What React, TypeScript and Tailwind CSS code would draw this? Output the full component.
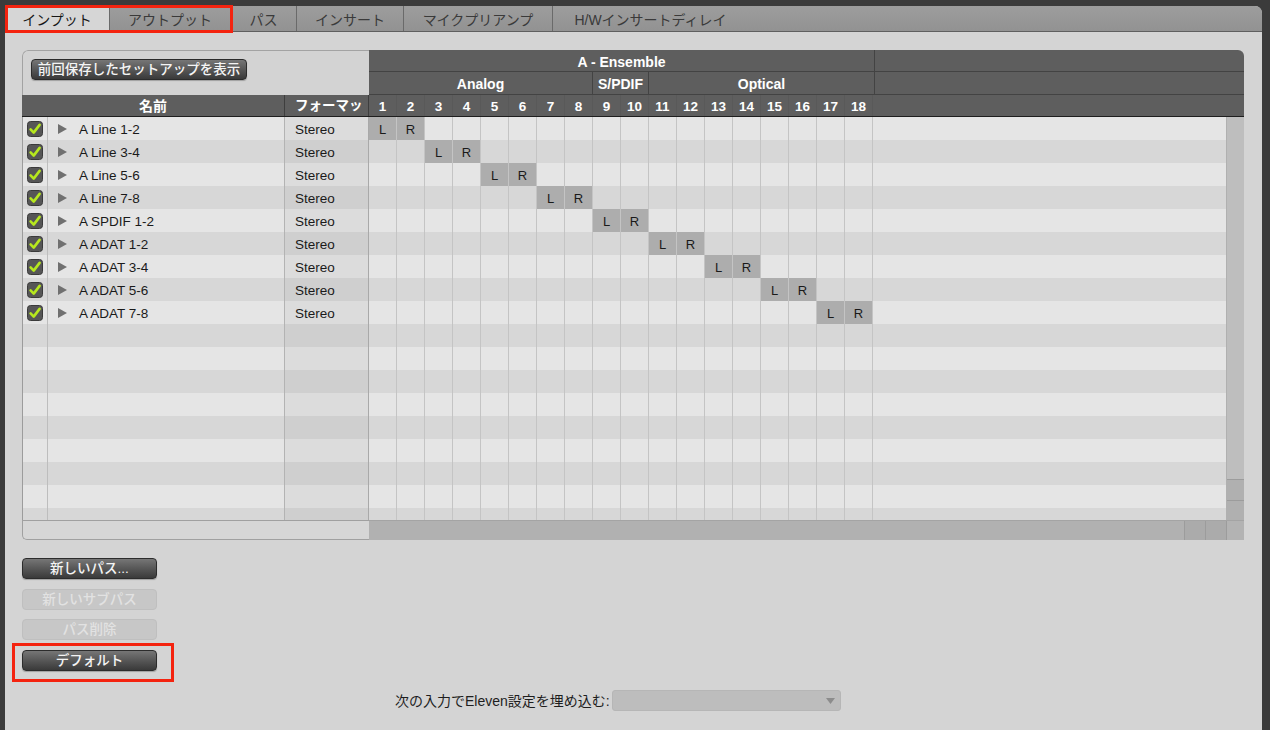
import React from "react";

const NAMES = [
  "A Line 1-2",
  "A Line 3-4",
  "A Line 5-6",
  "A Line 7-8",
  "A SPDIF 1-2",
  "A ADAT 1-2",
  "A ADAT 3-4",
  "A ADAT 5-6",
  "A ADAT 7-8",
];

const TOTAL_ROWS = 18;
const CH = Array.from({ length: 18 }, (_, i) => i);

function Check() {
  return (
    <svg width="16" height="16" viewBox="0 0 16 16">
      <rect x="0.5" y="0.5" width="15" height="15" rx="3" fill="#565656" stroke="#3a3a3a" />
      <path d="M3.6 8.4 L6.7 11.6 L12.6 3.9" fill="none" stroke="#b6e81e" strokeWidth="2.6" strokeLinecap="round" strokeLinejoin="round" />
    </svg>
  );
}

function Tri() {
  return (
    <svg width="9" height="10" viewBox="0 0 9 10">
      <polygon points="0,0 9,5 0,10" fill="#707070" />
    </svg>
  );
}

function Row({ i }: { i: number }) {
  const name = NAMES[i];
  const light = i % 2 === 0;
  return (
    <div className={`flex h-[23px] shrink-0 ${light ? "bg-[#e5e5e5]" : "bg-[#d7d7d7]"}`}>
      <div className="w-[26px] border-l border-l-[#9c9c9c] border-r border-r-[#bdbdbd] flex items-center justify-center">
        {name && <Check />}
      </div>
      <div className="w-[237px] border-r border-[#b3b3b3] flex items-center text-[13.5px] text-[#1a1a1a]">
        {name && (
          <>
            <span className="ml-[10px] flex items-center">
              <Tri />
            </span>
            <span className="ml-[12px] pt-[3px]">{name}</span>
          </>
        )}
      </div>
      <div className="w-[84px] border-r border-[#a9a9a9] bg-black/[0.035] flex items-center pl-[10px] pt-[3px] text-[13.5px] text-[#1a1a1a]">
        {name && "Stereo"}
      </div>
      {CH.map((c) => {
        const on = name && (c === 2 * i || c === 2 * i + 1);
        return (
          <div
            key={c}
            className={`w-[28px] border-r border-[#c4c4c4] flex items-center justify-center pt-[3px] text-[13px] text-[#1a1a1a] ${on ? "bg-[#adadad]" : ""}`}
          >
            {on ? (c === 2 * i ? "L" : "R") : ""}
          </div>
        );
      })}
      <div className="flex-1" />
    </div>
  );
}

function DarkButton({ label, w }: { label: string; w: string }) {
  return (
    <div
      className={`${w} h-[21px] rounded-[4px] border border-[#2c2c2c] bg-linear-to-b from-[#767676] to-[#3a3a3a] flex items-center justify-center pt-[1px] text-[#f4f4f4] text-[13.5px] font-medium shadow-[0_1px_1px_rgba(0,0,0,0.25)]`}
    >
      {label}
    </div>
  );
}

function DisabledButton({ label }: { label: string }) {
  return (
    <div className="w-[135px] h-[21px] rounded-[4px] border border-[#bfbfbf] bg-[#c7c7c7] flex items-center justify-center pt-[1px] text-[#e2e2e2] text-[13.5px] font-medium">
      {label}
    </div>
  );
}

export default function App() {
  const tabs = [
    { label: "インプット", w: "w-[105px]", active: true },
    { label: "アウトプット", w: "w-[121px]" },
    { label: "パス", w: "w-[66px]" },
    { label: "インサート", w: "w-[107px]" },
    { label: "マイクプリアンプ", w: "w-[149px]" },
    { label: "H/Wインサートディレイ", w: "w-[195px]", last: true },
  ];

  return (
    <div className="w-[1270px] h-[730px] bg-[#3b3b3b] relative overflow-hidden font-['Liberation_Sans','Noto_Sans_CJK_JP',sans-serif]">
      <div className="absolute inset-0 flex items-start pl-[5px] pt-[6px]">
        {/* window */}
        <div className="w-[1257px] h-[724px] bg-[#d4d4d4] rounded-tr-[7px] overflow-hidden flex flex-col">
          {/* tab bar */}
          <div className="h-[26px] shrink-0 flex bg-linear-to-b from-[#9d9d9d] to-[#929292] border-b border-[#5f5f5f]">
            {tabs.map((t) => (
              <div
                key={t.label}
                className={`${t.w} h-full flex items-center justify-center pt-[3px] text-[14px] ${
                  t.active ? "bg-[#d6d6d6] text-[#161616]" : "text-[#3a3a3a]"
                } ${t.last ? "" : "border-r border-[#6a6a6a]"}`}
              >
                {t.label}
              </div>
            ))}
            <div className="flex-1" />
          </div>

          {/* content */}
          <div className="flex-1 flex flex-col pl-[17px] pt-[18px]">
            {/* table */}
            <div className="w-[1222px] h-[490px] flex flex-col rounded-t-[6px] overflow-hidden">
              {/* top header */}
              <div className="h-[45px] flex shrink-0">
                <div className="w-[347px] h-full bg-[#d3d3d3] border-l border-t border-[#a3a3a3] rounded-tl-[6px] pl-[8px] pt-[8px]">
                  <DarkButton label="前回保存したセットアップを表示" w="w-[216px]" />
                </div>
                <div className="flex-1 flex flex-col bg-[#5e5e5e] text-white font-bold text-[14px]">
                  <div className="h-[22px] flex border-b border-[#434343]">
                    <div className="w-[506px] border-r border-[#434343] flex items-center justify-center pt-[3px]">A - Ensemble</div>
                    <div className="flex-1" />
                  </div>
                  <div className="h-[23px] flex border-b border-[#434343]">
                    <div className="w-[224px] border-r border-[#434343] flex items-center justify-center pt-[3px]">Analog</div>
                    <div className="w-[56px] border-r border-[#434343] flex items-center justify-center pt-[3px]">S/PDIF</div>
                    <div className="w-[226px] border-r border-[#434343] flex items-center justify-center pt-[3px]">Optical</div>
                    <div className="flex-1" />
                  </div>
                </div>
              </div>

              {/* header row 3 */}
              <div className="h-[22px] shrink-0 flex bg-[#5e5e5e] border-b border-[#1e1e1e] text-white font-bold">
                <div className="w-[263px] border-r border-[#3e3e3e] flex items-center justify-center pt-[2px] text-[14px]">名前</div>
                <div className="w-[84px] border-r border-[#3e3e3e] flex items-center pl-[10px] pt-[2px] text-[13.5px] whitespace-nowrap overflow-hidden">フォーマッ</div>
                {CH.map((c) => (
                  <div key={c} className="w-[28px] border-r border-[#595959] flex items-center justify-center pt-[3px] text-[13.5px]">
                    {c + 1}
                  </div>
                ))}
                <div className="flex-1" />
              </div>

              {/* body */}
              <div className="h-[403px] shrink-0 flex">
                <div className="flex-1 flex flex-col overflow-hidden">
                  {Array.from({ length: TOTAL_ROWS }, (_, i) => (
                    <Row key={i} i={i} />
                  ))}
                </div>
                <div className="w-[18px] flex flex-col bg-[#bebebe] border-l border-[#b0b0b0]">
                  <div className="flex-1" />
                  <div className="h-[21px] bg-[#b0b0b0] border-t border-[#9c9c9c]" />
                  <div className="h-[20px] bg-[#b0b0b0] border-t border-[#9c9c9c]" />
                </div>
              </div>

              {/* bottom scrollbar */}
              <div className="h-[20px] shrink-0 flex">
                <div className="w-[347px] bg-[#d6d6d6] border-l border-b border-t border-[#a0a0a0] rounded-bl-[5px]" />
                <div className="flex-1 flex bg-[#b1b1b1] border-t border-[#a4a4a4]">
                  <div className="flex-1" />
                  <div className="w-[21px] border-l border-[#9c9c9c] bg-[#ababab]" />
                  <div className="w-[21px] border-l border-[#9c9c9c] bg-[#ababab]" />
                  <div className="w-[18px] border-l border-[#9c9c9c] bg-[#b3b3b3]" />
                </div>
              </div>
            </div>

            {/* buttons */}
            <div className="flex flex-col mt-[18px]">
              <DarkButton label="新しいパス..." w="w-[135px]" />
              <div className="mt-[10px]">
                <DisabledButton label="新しいサブパス" />
              </div>
              <div className="mt-[9px]">
                <DisabledButton label="パス削除" />
              </div>
              <div className="mt-[10px]">
                <DarkButton label="デフォルト" w="w-[135px]" />
              </div>
            </div>

            {/* embed row */}
            <div className="flex items-center mt-[18px] ml-[373px]">
              <span className="text-[14px] text-[#1e1e1e] whitespace-nowrap pt-[2px]">次の入力でEleven設定を埋め込む:</span>
              <div className="ml-[2px] w-[229px] h-[21px] rounded-[3px] bg-[#bdbdbd] border border-[#b6b6b6] flex items-center justify-end pr-[5px]">
                <svg width="9" height="6" viewBox="0 0 9 6">
                  <polygon points="0,0 9,0 4.5,6" fill="#8c8c8c" />
                </svg>
              </div>
            </div>
          </div>
        </div>
        <div className="flex-1" />
      </div>

      {/* red annotation boxes */}
      <div className="absolute left-[5px] top-[5px] w-[228px] h-[28px] border-[3px] border-[#f4230f]" />
      <div className="absolute left-[12px] top-[643px] w-[162px] h-[39px] border-[3px] border-[#f4230f]" />
    </div>
  );
}
